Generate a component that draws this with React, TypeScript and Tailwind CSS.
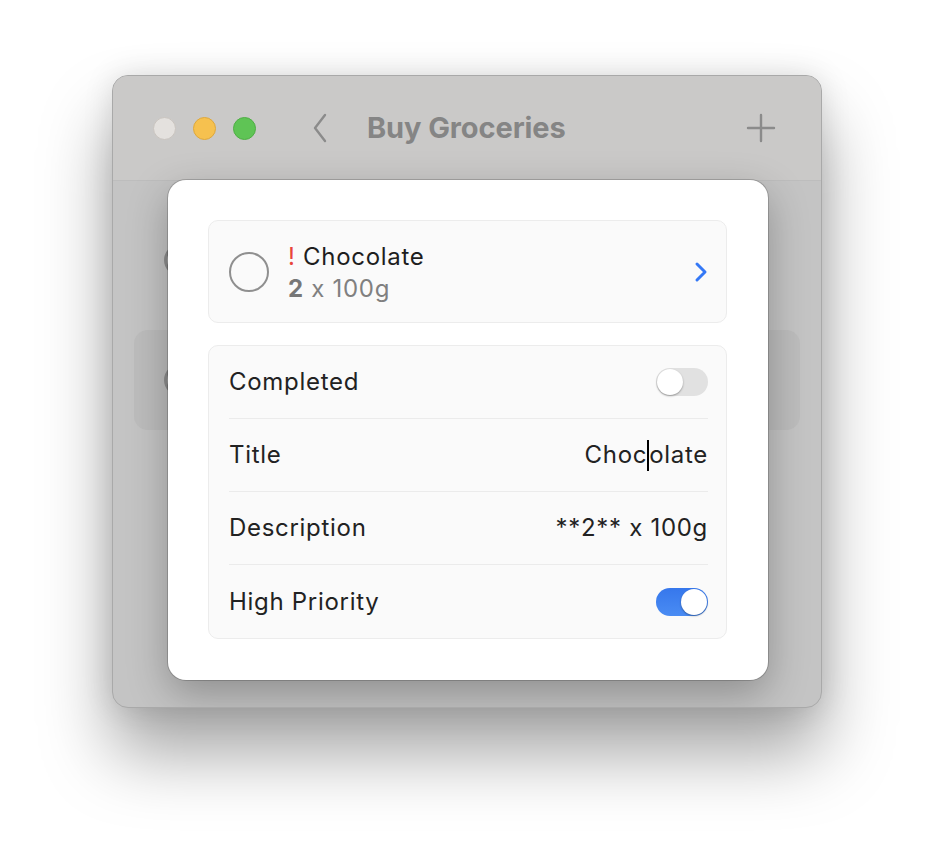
import { useState } from "react";

const font = { fontFamily: "Inter, 'Noto Sans', sans-serif" };

const Toggle = ({ on }: { on: boolean }) => {
  return (
    <div
      className={`flex h-[28px] w-[52px] items-center rounded-full p-[1px] ${
        on ? "justify-end bg-gradient-to-b from-[#3677ec] to-[#4a8cf3]" : "justify-start bg-[#e1e1e1]"
      }`}
    >
      <div className="h-[26px] w-[26px] rounded-full bg-white shadow-[0_1px_2px_rgba(0,0,0,0.35)]" />
    </div>
  );
};

const Row = ({ label, children, last }: { label: string; children: React.ReactNode; last?: boolean }) => (
  <div
    className={`ml-[20px] mr-[18px] flex h-[73px] items-center justify-between ${
      last ? "" : "border-b border-[#ebebeb]"
    }`}
  >
    <span className="text-[24px] tracking-[0.7px] text-[#222]">{label}</span>
    {children}
  </div>
);

export default function App() {
  const [completed] = useState(false);
  const [priority] = useState(true);

  return (
    <div className="min-h-[856px] w-[934px] bg-white pt-[75px]" style={font}>
      <div className="relative ml-[112px] h-[633px] w-[710px] overflow-hidden rounded-[16px] border border-[#a9a9a9] bg-[#c4c4c4] shadow-[0_45px_70px_rgba(0,0,0,0.36),0_0_30px_rgba(0,0,0,0.12)]">
        {/* title bar */}
        <div className="flex h-[105px] items-center border-b border-[#bdbdbd] bg-[#cac9c8] pl-[40px] pr-[45px]">
          <div className="flex gap-[17px]">
            <div className="h-[23px] w-[23px] rounded-full border border-[#c9c4bf] bg-[#e4e1de]" />
            <div className="h-[23px] w-[23px] rounded-full border border-[#dea83c] bg-[#f6c14f]" />
            <div className="h-[23px] w-[23px] rounded-full border border-[#4fae45] bg-[#5fc455]" />
          </div>
          <svg className="ml-[54px]" width="20" height="32" viewBox="0 0 20 32" fill="none">
            <path d="M15 3 L5 16 L15 29" stroke="#8b8b8b" strokeWidth="2.4" strokeLinecap="round" strokeLinejoin="round" />
          </svg>
          <span className="ml-[37px] text-[29px] font-bold tracking-[-0.1px] text-[#858585]">Buy Groceries</span>
          <svg className="ml-auto" width="30" height="30" viewBox="0 0 30 30" fill="none">
            <path d="M15 2 V28 M2 15 H28" stroke="#8b8b8b" strokeWidth="2.4" strokeLinecap="round" />
          </svg>
        </div>

        {/* dimmed list behind the sheet */}
        <div className="flex flex-col gap-[35px] px-[21px] pt-[44px]">
          <div className="flex h-[70px] items-center px-[30px]">
            <div className="h-[32px] w-[32px] rounded-full border-[3px] border-[#8d8d8d]" />
          </div>
          <div className="flex h-[100px] items-center rounded-[14px] bg-[#bdbdbd] px-[30px]">
            <div className="h-[32px] w-[32px] rounded-full border-[3px] border-[#8d8d8d]" />
          </div>
        </div>

        {/* sheet */}
        <div className="absolute left-[55px] top-[104px] flex h-[500px] w-[600px] flex-col gap-[22px] rounded-[18px] bg-white px-[40px] pt-[40px] shadow-[0_0_0_1px_rgba(0,0,0,0.18),0_14px_40px_rgba(0,0,0,0.28)]">
          <div className="flex h-[103px] w-[519px] items-center rounded-[10px] border border-[#ececec] bg-[#fafafa] pl-[20px] pr-[18px]">
            <div className="h-[40px] w-[40px] rounded-full border-[2.5px] border-[#8f8f8f]" />
            <div className="ml-[19px] flex flex-col pt-[2px] leading-[32px] tracking-[0.7px]">
              <span className="text-[24px] text-[#1e1e1e]">
                <span className="text-[#e8453c]">!</span> Chocolate
              </span>
              <span className="text-[24px] text-[#808080]">
                <span className="font-bold text-[#777]">2</span> x 100g
              </span>
            </div>
            <svg className="ml-auto" width="14" height="22" viewBox="0 0 14 22" fill="none">
              <path d="M3 3 L11 11 L3 19" stroke="#3478f6" strokeWidth="3" strokeLinecap="round" strokeLinejoin="round" />
            </svg>
          </div>

          <div className="flex w-[519px] flex-col rounded-[10px] border border-[#ececec] bg-[#fafafa]">
            <Row label="Completed">
              <Toggle on={completed} />
            </Row>
            <Row label="Title">
              <span className="flex items-center text-[24px] tracking-[0.7px] text-[#222]">
                Choc
                <span className="inline-block h-[31px] w-[2px] bg-black" />
                olate
              </span>
            </Row>
            <Row label="Description">
              <span className="text-[24px] tracking-[0.7px] text-[#222]">**2** x 100g</span>
            </Row>
            <Row label="High Priority" last>
              <Toggle on={priority} />
            </Row>
          </div>
        </div>
      </div>
    </div>
  );
}
